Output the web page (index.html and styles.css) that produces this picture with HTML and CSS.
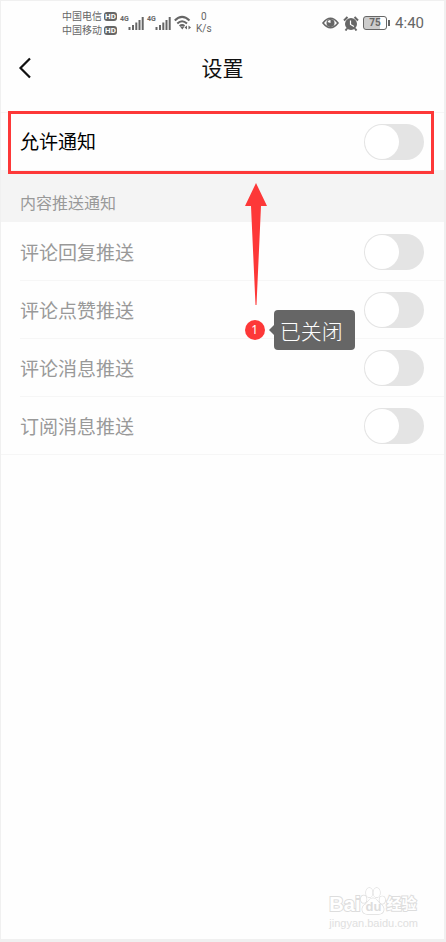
FILE: index.html
```html
<!DOCTYPE html>
<html lang="zh-CN">
<head>
<meta charset="utf-8">
<meta name="viewport" content="width=device-width, initial-scale=1">
<title>设置</title>
<link rel="stylesheet" href="styles.css">
</head>
<body>
<div class="screen">
  <div class="status">
    <div class="carriers">
      <div class="carrier"><span>中国电信</span><b class="hd">HD</b></div>
      <div class="carrier"><span>中国移动</span><b class="hd">HD</b></div>
    </div>
    <div class="signals">
      <div class="signal">
        <span class="gen">4G</span>
        <svg width="16" height="14" viewBox="0 0 16 14" aria-hidden="true"><path d="M1.5 14v-3M5 14v-5M8.300 14V6.500M11.500 14V4M14.700 14V1" stroke="currentColor" stroke-width="2" fill="none"/></svg>
      </div>
      <div class="signal">
        <span class="gen">4G</span>
        <svg width="16" height="14" viewBox="0 0 16 14" aria-hidden="true"><path d="M1.5 14v-3M5 14v-5M8.300 14V6.500M11.500 14V4M14.700 14V1" stroke="currentColor" stroke-width="2" fill="none"/></svg>
      </div>
    </div>
    <svg class="wifi" width="18" height="16" viewBox="0 0 18 16" aria-hidden="true"><path d="M.8 5.500Q8 -1.800 15.500 5.500M3.300 8.500Q8 4 13 8.500M5.600 11Q8.200 9 10.500 11" fill="none" stroke="currentColor" stroke-width="2"/><path d="M6 11.500h4.500l-2.200 3zM10.500 12.500l2.500-2v4zM17 12.500l-2.500-2v4z" fill="currentColor"/></svg>
    <div class="speed"><span>0</span><span>K/s</span></div>
    <div class="system">
      <svg width="17" height="12" viewBox="0 0 17 12" aria-hidden="true"><path d="M1 6Q8.500 -3.500 16 6Q8.500 15.500 1 6z" fill="none" stroke="currentColor" stroke-width="1.600"/><circle cx="8.500" cy="6" r="4" fill="currentColor"/><path d="M8.500 6L5.500 5A3 3 0 0 1 8.500 3z" fill="#fff"/></svg>
      <svg width="16" height="15" viewBox="0 0 16 15" aria-hidden="true"><circle cx="8" cy="8" r="6" fill="currentColor"/><path d="M1 4.500L4.500 1M15 4.500L11.500 1M4 12.500L2.500 14.500M12 12.500l1.500 2" stroke="currentColor" stroke-width="2"/><path d="M7.500 4.500V8.500l3.500 2" fill="none" stroke="#fff" stroke-width="1.200"/></svg>
      <div class="battery">75</div>
      <time class="clock">4:40</time>
    </div>
  </div>

  <header class="bar">
    <button class="back" type="button" aria-label="返回"><svg width="14" height="22" viewBox="0 0 14 22" aria-hidden="true"><path d="M12 1.500L2.500 11L12 20.500" fill="none" stroke="currentColor" stroke-width="2.200"/></svg></button>
    <h1 class="title">设置</h1>
  </header>

  <main>
    <div class="row main-row">
      <label for="allow">允许通知</label>
      <input class="switch" type="checkbox" role="switch" id="allow">
      <div class="highlight"></div>
      <div class="pointer">
        <svg width="22" height="122" viewBox="0 0 22 122" aria-hidden="true"><path d="M11 0L22 23H16L11.500 122H10.500L6 23H0z" fill="currentColor"/></svg>
        <div class="note"><span class="num">1</span><span class="tip">已关闭</span></div>
      </div>
    </div>
    <h2 class="section">内容推送通知</h2>
    <div class="list">
      <div class="row"><label for="reply">评论回复推送</label><input class="switch" type="checkbox" role="switch" id="reply"></div>
      <div class="row"><label for="like">评论点赞推送</label><input class="switch" type="checkbox" role="switch" id="like"></div>
      <div class="row"><label for="message">评论消息推送</label><input class="switch" type="checkbox" role="switch" id="message"></div>
      <div class="row"><label for="subscribe">订阅消息推送</label><input class="switch" type="checkbox" role="switch" id="subscribe"></div>
    </div>
  </main>

  <footer class="mark">
    <div class="brand">
      <span>Bai</span>
      <span class="paw"><svg width="26" height="30" viewBox="0 0 28 30" aria-hidden="true"><g fill="#fff" stroke="currentColor" stroke-width="1.500"><ellipse cx="4" cy="13" rx="3" ry="4"/><ellipse cx="10" cy="6" rx="3.500" ry="5"/><ellipse cx="18" cy="6" rx="3.500" ry="5"/><ellipse cx="24" cy="14" rx="3" ry="4"/><path d="M14 12C10 12 9 16 6 18.500C1 21 1 29 8 29H20C27 29 27 21 22 18.500C19 16 18 12 14 12z"/></g></svg><em>du</em></span>
      <span class="cn">经验</span>
    </div>
    <div class="url">jingyan.baidu.com</div>
  </footer>
</div>
</body>
</html>
```
FILE: styles.css
```css
* { box-sizing: border-box; }

body {
  margin: 0;
  background: #f0f0f0;
  font-family: "Noto Sans", "Noto Sans CJK SC", sans-serif;
}

.screen {
  display: flex;
  flex-direction: column;
  min-height: 100vh;
  border: solid #f0f0f0;
  border-width: 1px 2px 3px 1px;
  background: #fefefe;
}

.status {
  display: flex;
  align-items: center;
  height: 44px;
  padding: 0 20px 0 61px;
  color: #666;
}

.carrier {
  display: flex;
  align-items: center;
  gap: 2px;
  font-family: "Noto Sans CJK SC", sans-serif;
  font-size: 10px;
  line-height: 14px;
}

.hd {
  width: 13px;
  border-radius: 3px;
  background: #666;
  color: #fff;
  font: bold 8px/9px Roboto, sans-serif;
  text-align: center;
}

.signals {
  display: flex;
  gap: 3px;
  margin-left: 3px;
}

.signal {
  display: flex;
  align-items: flex-end;
}

.gen {
  align-self: flex-start;
  width: 8px;
  font: bold 7px/6px "Liberation Sans Narrow", Roboto, sans-serif;
}

.wifi { margin-left: 3px; }

.speed {
  display: flex;
  flex-direction: column;
  margin-left: 4px;
  font: 10px/12px Roboto, sans-serif;
  text-align: center;
}

.system {
  display: flex;
  align-items: center;
  gap: 4px;
  margin-left: auto;
}

.battery {
  position: relative;
  width: 24px;
  margin-right: 4px;
  border: 1px solid #666;
  border-radius: 3px;
  background: linear-gradient(90deg, #ccc 75%, #fff 75%);
  font: bold 10px/12px Roboto, sans-serif;
  text-align: center;
}

.battery::after {
  content: "";
  position: absolute;
  top: 3px;
  right: -4px;
  width: 2px;
  height: 6px;
  background: #666;
}

.clock { font: 15px/20px Roboto, sans-serif; }

.bar {
  display: grid;
  grid-template-columns: 48px 1fr 48px;
  align-items: center;
  height: 67px;
  padding-bottom: 22px;
}

.back {
  display: flex;
  padding: 0 0 0 17px;
  border: 0;
  background: none;
  color: #111;
}

.title {
  grid-column: 2;
  margin: 0;
  color: #111;
  font-size: 21px;
  font-weight: 400;
  line-height: 30px;
  text-align: center;
}

.row {
  display: flex;
  align-items: center;
  justify-content: space-between;
  height: 58px;
  margin-left: 19px;
  padding-right: 20px;
  border-bottom: 1px solid #f6f6f6;
  color: #999;
  font-size: 19px;
  line-height: 28px;
}

.list {
  padding-top: 1px;
}

.list label {
  padding-top: 2px;
}

.row:last-child {
  margin-left: 0;
  padding-left: 19px;
}

.main-row {
  position: relative;
  margin-left: 0;
  padding-left: 19px;
  border-top: 1px solid #f6f6f6;
  border-bottom: 0;
  color: #000;
}

.switch {
  appearance: none;
  display: flex;
  width: 60px;
  height: 36px;
  margin: 0;
  padding: 1px;
  border-radius: 18px;
  background: #e4e4e4;
}

.switch::before {
  content: "";
  width: 34px;
  height: 34px;
  border-radius: 50%;
  background: #fff;
}

.switch:checked { justify-content: flex-end; background: #fd3838; }

.highlight {
  position: absolute;
  top: -2px;
  right: 10px;
  bottom: -4px;
  left: 7px;
  border: 3px solid #fd3838;
  pointer-events: none;
}

.pointer {
  position: absolute;
  top: 70px;
  left: 55%;
  color: #fd3838;
}

.pointer svg { display: block; }

.note {
  display: flex;
  align-items: center;
  gap: 9px;
  margin-top: 5px;
}

.num {
  width: 20px;
  border-radius: 50%;
  background: #fd3838;
  color: #fff;
  font-size: 12px;
  line-height: 20px;
  text-align: center;
}

.tip {
  position: relative;
  padding: 0 12px 0 6px;
  border-radius: 4px;
  background: #666;
  color: #fff;
  font-family: "Noto Sans CJK SC", sans-serif;
  font-size: 21px;
  font-weight: 300;
  line-height: 40px;
  white-space: nowrap;
}

.tip::before {
  content: "";
  position: absolute;
  top: 15px;
  left: -5px;
  border: solid transparent;
  border-width: 5px 5px 5px 0;
  border-right-color: #666;
}

.section {
  margin: 0;
  padding: 19px 19px 5px;
  background: #f4f4f4;
  color: #999;
  font-size: 16px;
  font-weight: 400;
  line-height: 28px;
}

.mark {
  align-self: flex-end;
  margin-top: auto;
  padding: 0 26px 9px 0;
  color: #ddd;
}

.brand {
  display: flex;
  align-items: flex-end;
  color: #fff;
  font: bold 20px/24px "Liberation Sans", "Noto Sans CJK SC", sans-serif;
  paint-order: stroke;
  -webkit-text-stroke: 2px #ddd;
}

.paw {
  position: relative;
  color: #ddd;
}

.paw svg { display: block; }

.paw em {
  position: absolute;
  right: 0;
  bottom: 0;
  left: 0;
  color: #ddd;
  font-size: 13px;
  font-style: normal;
  line-height: 18px;
  text-align: center;
  -webkit-text-stroke: 0;
}

.cn { font-size: 15px; }

.url {
  color: #e0e0e0;
  font: 11px/14px "Liberation Sans", sans-serif;
}
```
